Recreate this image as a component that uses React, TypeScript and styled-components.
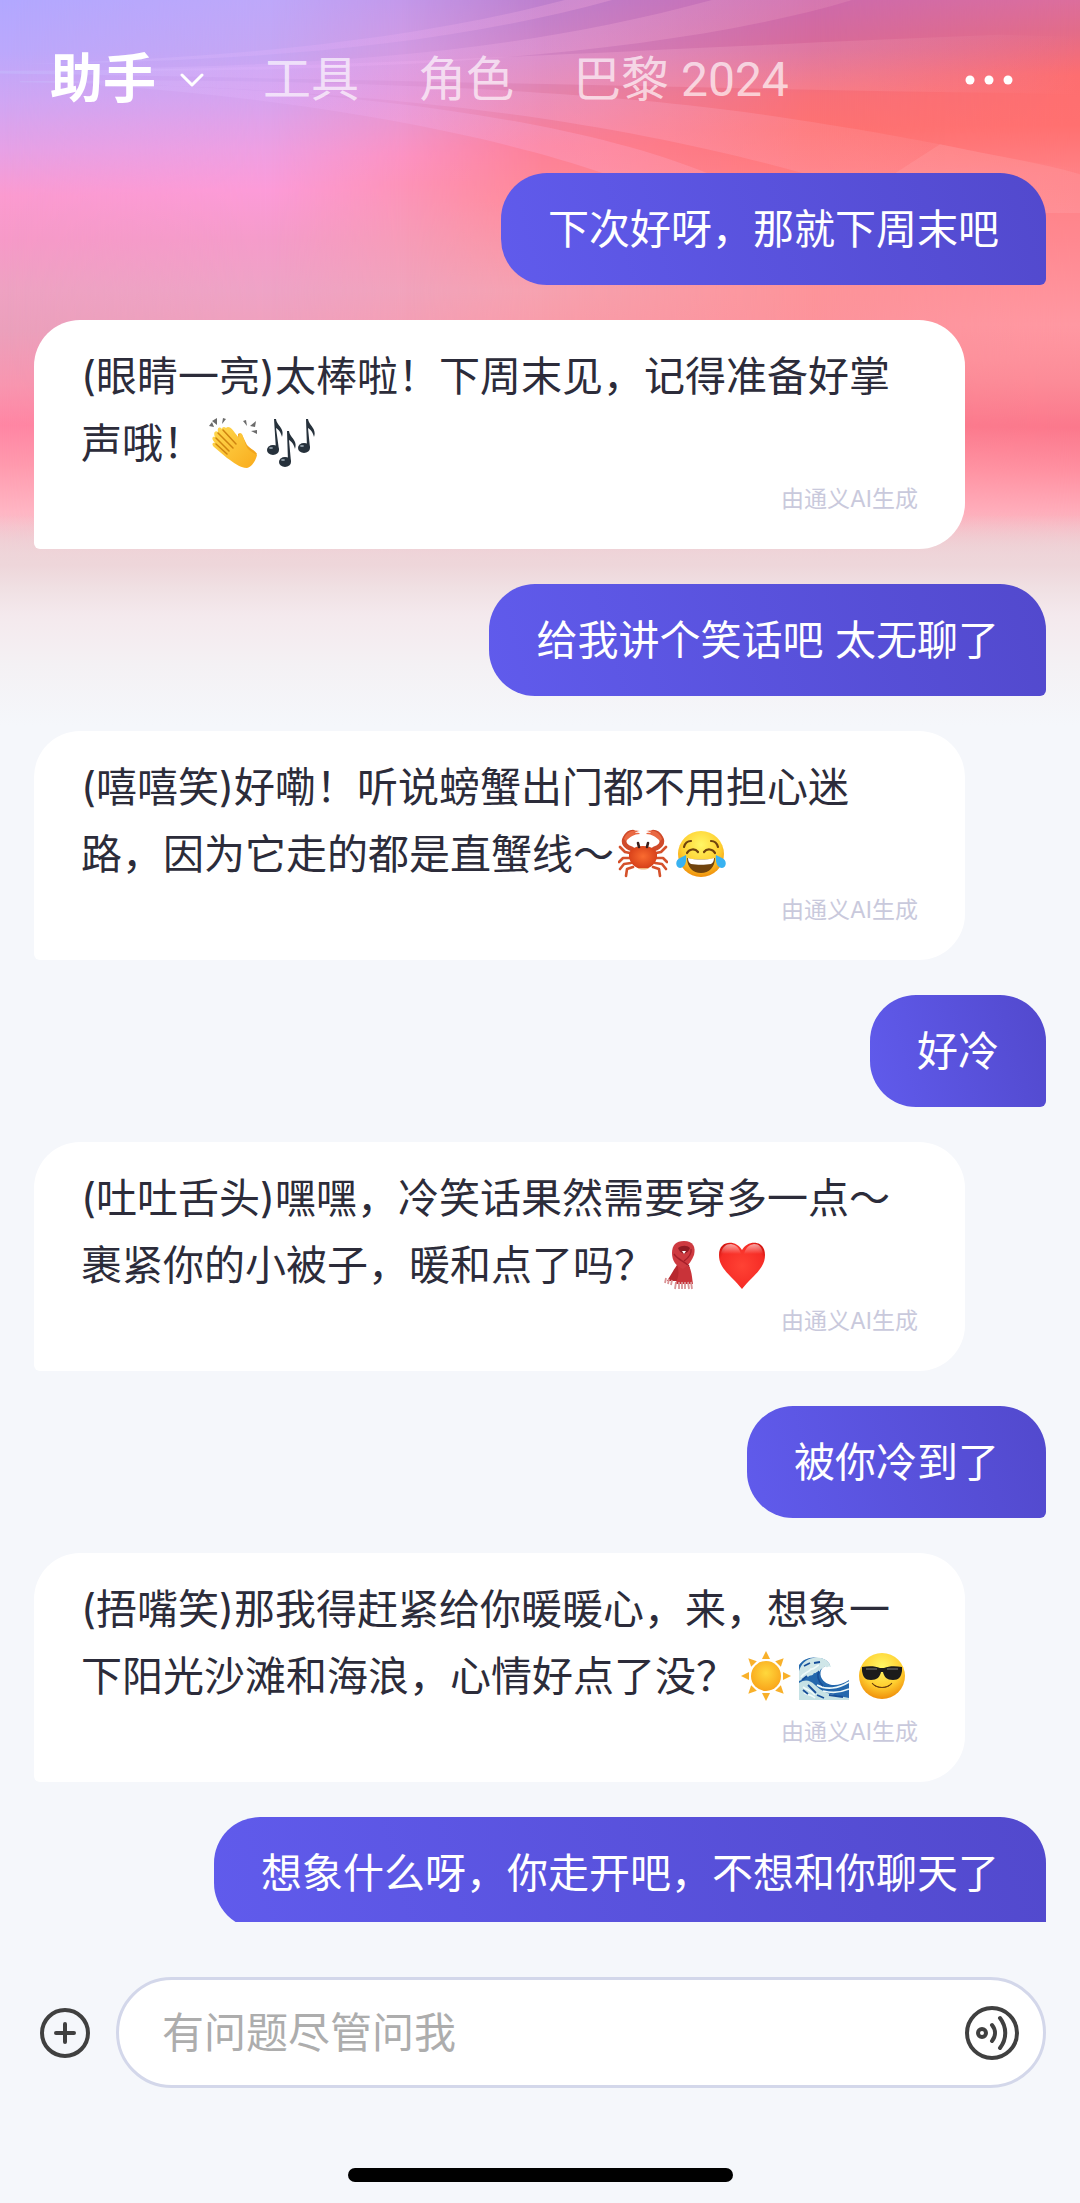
import React from "react";
import styled, { createGlobalStyle } from "styled-components";

const GlobalStyle = createGlobalStyle`
  *, *::before, *::after { box-sizing: border-box; }
  html, body, #root { height: 100%; }
  body {
    margin: 0;
    background: #f5f7fb;
    font-family: Inter, "Noto Sans CJK SC", sans-serif;
  }
  button, input { font: inherit; color: inherit; border: 0; background: none; padding: 0; margin: 0; }
`;

const Screen = styled.div`
  position: relative;
  isolation: isolate;
  display: flex;
  flex-direction: column;
  height: 100%;
  overflow: hidden;
`;

const Backdrop = styled.div`
  position: absolute;
  inset: 0 0 auto 0;
  height: 800px;
  z-index: -1;
`;

/* One vertical colour ramp; neighbouring ramps blend across the width. */
const Ramp = styled.div<{ $stops: string; $from?: number; $to?: number }>`
  position: absolute;
  inset: 0;
  background: linear-gradient(to bottom, ${(p) => p.$stops});
  ${(p) =>
    p.$to !== undefined &&
    `mask-image: linear-gradient(to right, transparent ${p.$from}%, black ${p.$to}%);`}
`;

const Rays = styled.svg`
  position: absolute;
  top: 0;
  left: 0;
  width: 100%;
  height: 213px;
`;

const Header = styled.header`
  display: flex;
  align-items: center;
  flex: none;
  height: 160px;
  padding: 0 63px 0 50px;
`;

const Tabs = styled.nav`
  display: flex;
  align-items: center;
  gap: 59px;
  flex: 1;
`;

const Tab = styled.button<{ $active?: boolean }>`
  display: flex;
  align-items: center;
  gap: 24px;
  line-height: 72px;
  white-space: nowrap;
  font-family: Roboto, "Noto Sans CJK SC", sans-serif;
  font-size: ${(p) => (p.$active ? 53 : 48)}px;
  font-weight: ${(p) => (p.$active ? 700 : 400)};
  color: ${(p) => (p.$active ? "#fff" : "rgba(255, 255, 255, 0.68)")};
`;

const IconButton = styled.button`
  display: flex;
  flex: none;
`;

const Messages = styled.main`
  display: flex;
  flex-direction: column;
  align-items: flex-start;
  gap: 35px;
  flex: 1;
  min-height: 0;
  padding: 13px 34px 0;
  overflow-y: auto;
  scrollbar-width: none;
`;

const Bubble = styled.article`
  flex: none;
  padding: 23px 47px 22px;
  border-radius: 46px;
  font-size: 41px;
  line-height: 67px;
`;

const UserBubble = styled(Bubble)`
  align-self: flex-end;
  color: #fff;
  background: linear-gradient(75deg, #605bec, #5249cd);
  border-bottom-right-radius: 6px;
`;

const ReplyBubble = styled(Bubble)`
  width: 92%;
  padding-bottom: 34px;
  color: #2c2c3a;
  background: #fff;
  border-bottom-left-radius: 6px;
`;

const MessageText = styled.p`
  margin: 0;
`;

const Attribution = styled.footer`
  margin-top: 6px;
  font-size: 23px;
  line-height: 32px;
  text-align: right;
  color: #c9c9dc;
`;

const EmojiIcon = styled.svg`
  width: 50px;
  height: 50px;
  margin: 0 4px;
  vertical-align: -10px;
`;

const Footer = styled.footer`
  flex: none;
  padding: 55px 0 21px;
`;

const Composer = styled.form`
  display: flex;
  align-items: center;
  gap: 26px;
  padding: 0 34px 0 40px;
`;

const Field = styled.div`
  display: flex;
  align-items: center;
  flex: 1;
  height: 111px;
  padding: 0 24px 0 43px;
  border: 3px solid #d3d7ea;
  border-radius: 56px;
  background: #fff;
`;

const Input = styled.input`
  flex: 1;
  min-width: 0;
  font-size: 42px;
  line-height: 66px;
  outline: none;
  color: #2c2c3a;
  &::placeholder { color: #adadad; opacity: 1; }
`;

const HomeIndicator = styled.div`
  width: 385px;
  height: 14px;
  margin: 80px auto 0;
  border-radius: 7px;
  background: #000;
`;

const RAMPS: { stops: string; from?: number; to?: number }[] = [
  { stops: "#b2a8ff 0, #bba8fc 50px, #cfa6f4 100px, #e6a1e6 150px, #fb9bd0 195px, #f69ac8 240px, #eea2c2 290px, #eba0bc 330px, #f896b0 385px, #ff86a4 425px, #ff9aae 465px, #ffb6c4 512px, #f2c8d0 540px, #eed6d9 565px" },
  { stops: "#bea8fa 0, #c5a6f4 50px, #d7a3ee 100px, #ee9fe2 150px, #fc9bd8 190px, #f49cca 240px, #eea3c6 290px, #f0a0ba 340px, #fb90a8 390px, #ff849c 425px, #ff98ac 465px, #ffb4c2 512px, #f0ccd2 550px, #eedbdd 575px", from: 0, to: 25 },
  { stops: "#c398ea 0, #d29ae2 50px, #e096d8 90px, #ee95cc 125px, #fc92c2 155px, #fd93b8 185px, #f69cb8 240px, #f1a3bc 290px, #f69cb0 350px, #fe839a 425px, #ff98ab 465px, #ffb3c1 512px, #f0cbd2 550px, #eedadd 575px", from: 25, to: 37.5 },
  { stops: "#bd80ce 0, #cf84c6 50px, #e284b0 90px, #fc8098 145px, #ff8a98 200px, #f6a2b0 290px, #fb98a4 360px, #fd8096 425px, #ff98aa 465px, #ffb2c0 512px, #f0cad1 550px, #eed9dc 575px", from: 37.5, to: 50 },
  { stops: "#cc6aac 0, #d86a98 50px, #f87078 95px, #fe7272 130px, #ff7c80 175px, #fd949a 290px, #fc929c 360px, #fb7c8e 425px, #ff96a4 465px, #ffaebb 510px, #f0c9cf 545px, #eedbde 572px", from: 50, to: 75 },
  { stops: "#dc6e9c 0, #e26c8a 30px, #fd6e70 75px, #ff7070 125px, #ff8084 170px, #ff8890 240px, #ff98a2 325px, #fc8c98 380px, #fb788c 427px, #ff8fa0 470px, #ffabb9 510px, #f0c8ce 545px, #eddcdf 575px", from: 75, to: 100 },
  /* Full-width fade from the artwork into the page colour. */
  { stops: "#eed4d800 515px, #eed6da 565px, #f0e0e3 588px, #f4e9ed 615px, #f4f1f4 665px, #f5f7fb 725px" },
];

const ChevronDown = () => (
  <svg width="24" height="16" viewBox="0 0 24 16" fill="none" stroke="#fff" strokeWidth="3" strokeLinecap="round" strokeLinejoin="round" aria-hidden="true">
    <path d="M2 3l10 10L22 3" />
  </svg>
);

const Clap = () => (
  <EmojiIcon viewBox="0 0 50 50" role="img" aria-label="鼓掌">
    <defs>
      <linearGradient id="clapSkin" x1="0" y1="0" x2="1" y2="1">
        <stop offset="0" stopColor="#ffd94f" /><stop offset="1" stopColor="#f9ab1c" />
      </linearGradient>
    </defs>
    <g fill="#6b6b6b">
      <path d="M1 8l5 1-2-5z" /><path d="M4 3l5 4V0z" /><path d="M14 6l1-6 3 1z" />
      <path d="M35 3l4 5-1-6z" /><path d="M42 8l6-5-1 6z" /><path d="M43 13l6-1v4z" />
    </g>
    <path d="M30 16c2-2 4 0 5 3l4 8c2 3 9 6 10 9L40 49l-8-1z" fill="#f2a51d" />
    <path d="M18 10c3-3 7 2 9 5l4 5c0-4 1-6 3-4 3 7 3 10 6 15 3 3 7 5 9 6-1 5-5 12-10 13-7 0-14-6-20-10L6 29c-3-3-1-5 1-4-4-4-3-7 0-6-2-4 0-7 3-5-1-4 1-6 4-3 0-2 2-3 4-1z" fill="url(#clapSkin)" />
    <path d="M8 20l13 13M10 15l15 15M15 12l13 14M8 26l11 10" fill="none" stroke="#cf8410" strokeWidth="1.5" strokeLinecap="round" />
  </EmojiIcon>
);

const Notes = () => (
  <EmojiIcon viewBox="0 0 50 50" role="img" aria-label="音符">
    <g fill="#26313b">
      <ellipse cx="7" cy="32" rx="6" ry="5" /><ellipse cx="38" cy="30" rx="6" ry="5" /><ellipse cx="19" cy="44" rx="6" ry="5" />
      <path d="M8 1h2c1 7 9 9 6 18-1-5-4-8-6-9l3 22h-3z" /><path d="M40 1h2c1 7 9 9 6 18-1-5-4-8-6-9l2 20h-3z" /><path d="M21 13h2c1 7 9 9 6 18-1-5-4-8-6-9l2 22h-3z" />
    </g>
    <g fill="#8e9ba5"><ellipse cx="5" cy="30" rx="2" ry="1" /><ellipse cx="36" cy="28" rx="2" ry="1" /><ellipse cx="17" cy="42" rx="2" ry="1" /></g>
  </EmojiIcon>
);

const Crab = () => (
  <EmojiIcon viewBox="0 0 50 50" role="img" aria-label="螃蟹">
    <defs>
      <radialGradient id="crabShell" cx=".5" cy=".45" r=".6">
        <stop offset="0" stopColor="#fa6b30" /><stop offset="1" stopColor="#d23a16" />
      </radialGradient>
    </defs>
    <g fill="none" stroke="#d4512b" strokeWidth="2.6" strokeLinecap="round" strokeLinejoin="round">
      <path d="M12 24L7 23 2 18M12 29H5l-4 4M13 34l-7 1-4 5M15 38l-6 2-1 7M38 24l5-1 5-5M38 29h7l4 4M37 34l7 1 4 5M35 38l6 2 1 7" />
    </g>
    <g fill="none" stroke="#cf4a2a" strokeWidth="4.5" strokeLinecap="round">
      <path d="M14 20c-6-2-10-6-7-11 2-4 5-6 8-6M36 20c6-2 10-6 7-11-2-4-5-6-8-6" />
    </g>
    <path d="M6 10C8 3 15 0 22 2c-3 0-4 2-7 2 3 0 6-1 7 1-6 0-10 3-14 7zM44 10C42 3 35 0 28 2c3 0 4 2 7 2-3 0-6-1-7 1 6 0 10 3 14 7z" fill="#e96943" />
    <path d="M25 17c9 0 15 4 14 11-1 6-6 12-14 12s-13-6-14-12c-1-7 5-11 14-11z" fill="url(#crabShell)" />
    <path d="M20 39c1 2 9 2 11 0z" fill="#f0b27a" />
    <path d="M21 18l-1-4M29 18l1-4" stroke="#3a1e1b" strokeWidth="2.6" strokeLinecap="round" />
  </EmojiIcon>
);

const FaceGradient = ({ id }: { id: string }) => (
  <defs>
    <radialGradient id={id} cx=".5" cy=".3" r=".72">
      <stop offset="0" stopColor="#fff765" /><stop offset=".6" stopColor="#ffcf30" /><stop offset="1" stopColor="#ee8a08" />
    </radialGradient>
  </defs>
);

const Joy = () => (
  <EmojiIcon viewBox="0 0 50 50" role="img" aria-label="笑哭">
    <FaceGradient id="joyFace" />
    <circle cx="25" cy="25" r="23" fill="url(#joyFace)" />
    <path d="M11 29c8 2 20 2 28 0 0 9-6 15-14 15s-14-6-14-15z" fill="#70430d" />
    <path d="M12 29c8 2 18 2 26 0 0 3-1 5-3 6-6 1-14 1-20 0-2-1-3-3-3-6z" fill="#fff" />
    <path d="M11 24c2-4 8-5 11-1M28 23c3-4 9-3 11 1M8 18c1-4 4-6 7-6M42 18c-1-4-4-6-7-6" fill="none" stroke="#70430d" strokeWidth="2.2" strokeLinecap="round" />
    <path d="M10 26c1 6-1 13-6 13-5-1-5-8 0-10zM40 26c-1 6 1 13 6 13 5-1 5-8 0-10z" fill="#39b2f0" />
  </EmojiIcon>
);

const Scarf = () => (
  <EmojiIcon viewBox="0 0 50 50" role="img" aria-label="围巾">
    <path d="M20 22l11 5c-3 5-3 8-3 14H8c4-6 7-12 12-19z" fill="#b7282e" />
    <path d="M18 24l12 2c3 6 3 12 4 18H16c3-5 5-10 2-20z" fill="#c93339" />
    <path d="M25 1c9 0 12 6 10 14-2 5-5 10-11 14-7-3-11-8-11-16C13 5 17 1 25 1z" fill="#ce3a40" />
    <path d="M19 8c4-3 9-3 12 0-1 3-3 5-6 6-3-1-5-3-6-6z" fill="#8f1b23" />
    <path d="M23 11h4l-2 3z" fill="#fff" />
    <path d="M15 14c4 6 10 7 15 12M32 9c1 5-3 9-7 12" fill="none" stroke="#a51f29" strokeWidth="1.4" />
    <path d="M7 38l-1 5M10 39l-1 5M13 40l-1 5M17 42l-1 7M20 42v7M23 42v7M26 42v7M29 42l1 7M32 42l1 7" stroke="#d99496" strokeWidth="1.8" />
  </EmojiIcon>
);

const Heart = () => (
  <EmojiIcon viewBox="0 0 50 50" role="img" aria-label="红心">
    <defs>
      <radialGradient id="heartFill" cx=".5" cy=".5" r=".6">
        <stop offset="0" stopColor="#ff4234" /><stop offset=".8" stopColor="#f62c26" /><stop offset="1" stopColor="#d3140f" />
      </radialGradient>
      <linearGradient id="heartShine" x1="0" y1="0" x2="0" y2="1">
        <stop offset="0" stopColor="#fff" stopOpacity=".6" /><stop offset="1" stopColor="#fff" stopOpacity="0" />
      </linearGradient>
    </defs>
    <path d="M25 10C30 0 48-1 48 15c0 14-12 20-23 34C14 35 2 29 2 15 2-1 20 0 25 10z" fill="url(#heartFill)" />
    <path d="M4 14c1-7 5-10 10-10 5 1 8 3 10 10zM27 14c2-7 5-9 10-10 5 0 8 3 9 10z" fill="url(#heartShine)" />
  </EmojiIcon>
);

const Sun = () => (
  <EmojiIcon viewBox="0 0 50 50" role="img" aria-label="太阳">
    <defs>
      <radialGradient id="sunDisc" cx=".5" cy=".4" r=".6">
        <stop offset="0" stopColor="#ffd83c" /><stop offset="1" stopColor="#f9a51b" />
      </radialGradient>
    </defs>
    <circle cx="25" cy="25" r="15" fill="url(#sunDisc)" />
    {[0, 45, 90, 135, 180, 225, 270, 315].map((angle) => (
      <path key={angle} d="M25 0l4 8h-8z" fill="#f8b02a" transform={`rotate(${angle} 25 25)`} />
    ))}
  </EmojiIcon>
);

const Wave = () => (
  <EmojiIcon viewBox="0 0 50 50" role="img" aria-label="海浪">
    <path d="M0 49V14C4 8 12 5 19 7c6 0 10 3 12 7-7 0-11 5-9 12 4 9 16 11 28 3v20z" fill="#2468ad" />
    <path d="M0 20C2 13 7 8 14 7c8-2 16 2 18 9-3-2-4 2-6-1-2 3-5 2-5 6-3-2-4 2-6 1-2 4-4 1-6 4-3-1-5 3-9 4z" fill="#cfe6e8" />
    <path d="M0 32c6-4 11-3 16 2 6 6 13 9 24 11l10 2v2H0z" fill="#c6e2e5" />
    <path d="M2 26c3-5 7-4 10-8 3 1 5-3 8-4M4 36c4 3 8 3 12 8M5 42c4 2 9 2 11 5M18 34c9 5 21 4 32-3M24 40c8 2 17 2 26-2" fill="none" stroke="#f0fbfa" strokeWidth="1.6" />
    <path d="M20 20c-3 6 0 11 4 15M5 15l6-3M15 12l6-1M4 39l5 4M3 29l5-4M18 44l7 3M30 44l14 2M9 34l8 8" fill="none" stroke="#174f99" strokeWidth="1.8" />
  </EmojiIcon>
);

const Cool = () => (
  <EmojiIcon viewBox="0 0 50 50" role="img" aria-label="墨镜笑脸">
    <FaceGradient id="coolFace" />
    <circle cx="25" cy="25" r="23" fill="url(#coolFace)" />
    <path d="M5 16c7-1 13-1 18 1h4c5-2 11-2 18-1v4c-1 6-3 9-9 9-6 0-9-3-10-8h-2c-1 5-4 8-10 8-6 0-8-3-9-9z" fill="#1b1b1b" />
    <path d="M9 18h11M30 18h11" stroke="#5b5b5b" strokeWidth="1.4" />
    <path d="M15 32c6 6 14 6 20 0-3 6-17 6-20 0z" fill="#70430d" stroke="#70430d" strokeLinejoin="round" />
  </EmojiIcon>
);

type Message = { from: "user" | "ai"; text: string; emojis?: React.ComponentType[] };

const MESSAGES: Message[] = [
  { from: "user", text: "下次好呀，那就下周末吧" },
  { from: "ai", text: "(眼睛一亮)太棒啦！下周末见，记得准备好掌声哦！", emojis: [Clap, Notes] },
  { from: "user", text: "给我讲个笑话吧 太无聊了" },
  { from: "ai", text: "(嘻嘻笑)好嘞！听说螃蟹出门都不用担心迷路，因为它走的都是直蟹线～", emojis: [Crab, Joy] },
  { from: "user", text: "好冷" },
  { from: "ai", text: "(吐吐舌头)嘿嘿，冷笑话果然需要穿多一点～裹紧你的小被子，暖和点了吗？", emojis: [Scarf, Heart] },
  { from: "user", text: "被你冷到了" },
  { from: "ai", text: "(捂嘴笑)那我得赶紧给你暖暖心，来，想象一下阳光沙滩和海浪，心情好点了没？", emojis: [Sun, Wave, Cool] },
  { from: "user", text: "想象什么呀，你走开吧，不想和你聊天了" },
];

export default function App() {
  return (
    <>
      <GlobalStyle />
      <Screen>
        <Backdrop aria-hidden="true">
          {RAMPS.map((ramp) => (
            <Ramp key={ramp.stops} $stops={ramp.stops} $from={ramp.from} $to={ramp.to} />
          ))}
          <Rays viewBox="0 0 1080 220" preserveAspectRatio="none">
            <defs>
              <linearGradient id="ray" x1="0" y1="0" x2="1080" y2="0" gradientUnits="userSpaceOnUse">
                <stop offset="0" stopColor="#c4c4ff" stopOpacity=".35" />
                <stop offset=".3" stopColor="#f0b4ff" stopOpacity=".2" />
                <stop offset=".55" stopColor="#ffb4dc" stopOpacity=".26" />
                <stop offset=".8" stopColor="#ffb8c4" stopOpacity=".16" />
                <stop offset="1" stopColor="#ffb8c4" stopOpacity="0" />
              </linearGradient>
            </defs>
            <g fill="url(#ray)">
              <path d="M20 66C200 62 400 45 565 0H612C450 46 260 64 20 66z" />
              <path d="M120 71C300 66 500 60 712 0H852C640 66 300 74 120 73z" />
              <path d="M0 73C300 74 600 52 1000 36L1080 38V97C700 92 300 80 0 76z" />
              <path d="M20 84C240 80 560 88 760 118S980 162 1080 174V220H930C760 160 520 90 20 85z" />
              <path d="M100 87C300 90 560 116 710 180H606C480 134 280 100 100 88z" />
            </g>
            <path d="M895 179L940 149C990 160 1040 168 1080 180V220H830z" fill="#ffc4cc" fillOpacity=".14" />
          </Rays>
        </Backdrop>

        <Header>
          <Tabs>
            <Tab type="button" $active>
              助手
              <ChevronDown />
            </Tab>
            <Tab type="button">工具</Tab>
            <Tab type="button">角色</Tab>
            <Tab type="button">巴黎 2024</Tab>
          </Tabs>
          <IconButton type="button" aria-label="更多">
            <svg width="56" height="20" viewBox="0 0 56 20" fill="#fff" aria-hidden="true">
              <circle cx="9" cy="10" r="4.500" />
              <circle cx="28" cy="10" r="4.500" />
              <circle cx="47" cy="10" r="4.500" />
            </svg>
          </IconButton>
        </Header>

        <Messages>
          {MESSAGES.map((message) =>
            message.from === "user" ? (
              <UserBubble key={message.text}>
                <MessageText>{message.text}</MessageText>
              </UserBubble>
            ) : (
              <ReplyBubble key={message.text}>
                <MessageText>
                  {message.text}
                  {message.emojis?.map((Emoji, index) => (
                    <Emoji key={index} />
                  ))}
                </MessageText>
                <Attribution>由通义AI生成</Attribution>
              </ReplyBubble>
            )
          )}
        </Messages>

        <Footer>
          <Composer onSubmit={(event) => event.preventDefault()}>
            <IconButton type="button" aria-label="添加">
              <svg width="50" height="50" viewBox="0 0 50 50" fill="none" stroke="#404040" strokeWidth="4" strokeLinecap="round" aria-hidden="true">
                <circle cx="25" cy="25" r="23" />
                <path d="M25 16v18M16 25h18" />
              </svg>
            </IconButton>
            <Field>
              <Input type="text" aria-label="输入问题" placeholder="有问题尽管问我" />
              <IconButton type="button" aria-label="语音输入">
                <svg width="56" height="56" viewBox="0 0 56 56" fill="none" stroke="#404040" strokeWidth="4" strokeLinecap="round" aria-hidden="true">
                  <circle cx="29" cy="28" r="25" />
                  <circle cx="19" cy="28" r="4" />
                  <path d="M29 20c4 5 4 11 0 16M37 13c7 9 7 21 0 30" />
                </svg>
              </IconButton>
            </Field>
          </Composer>
          <HomeIndicator />
        </Footer>
      </Screen>
    </>
  );
}
